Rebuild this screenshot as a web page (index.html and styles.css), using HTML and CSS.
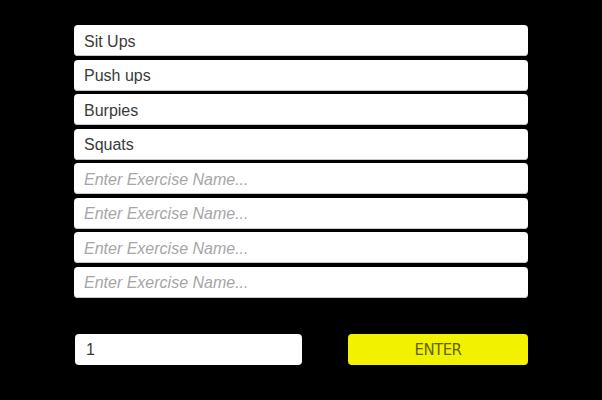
FILE: index.html
```html
<!DOCTYPE html>
<html>
<head>
<meta charset="utf-8">
<link rel="stylesheet" href="styles.css">
</head>
<body>
<div class="page">
  <div class="list">
    <input class="field" type="text" value="Sit Ups">
    <input class="field" type="text" value="Push ups">
    <input class="field" type="text" value="Burpies">
    <input class="field" type="text" value="Squats">
    <input class="field" type="text" placeholder="Enter Exercise Name...">
    <input class="field" type="text" placeholder="Enter Exercise Name...">
    <input class="field" type="text" placeholder="Enter Exercise Name...">
    <input class="field" type="text" placeholder="Enter Exercise Name...">
  </div>
  <div class="controls">
    <input class="field count" type="text" value="1">
    <button class="enter">ENTER</button>
  </div>
</div>
</body>
</html>
```
FILE: styles.css
```css
html, body {
  margin: 0;
  padding: 0;
  background: #000;
}
.page {
  width: 602px;
  height: 400px;
  box-sizing: border-box;
  padding: 25px 74px 0 74px;
  font-family: "Liberation Sans", Arial, sans-serif;
}
.list {
  display: flex;
  flex-direction: column;
  gap: 3.5px;
}
.field {
  display: block;
  box-sizing: border-box;
  width: 454px;
  height: 31px;
  margin: 0;
  border: none;
  border-radius: 4px;
  background: #fff;
  box-shadow: inset 0 -1px 0 #c8c8c8;
  padding: 2px 10px 0 10px;
  font-family: "Liberation Sans", Arial, sans-serif;
  font-size: 16px;
  color: #3a3a3a;
  outline: none;
}
.field::placeholder {
  color: #a6a6a6;
  font-style: italic;
}
.controls {
  display: flex;
  justify-content: space-between;
  margin-top: 36px;
}
.count {
  width: 227px;
  height: 31px;
  padding-left: 11px;
  box-shadow: none;
  margin-left: 1px;
}
.enter {
  width: 180px;
  height: 31px;
  border: none;
  border-radius: 4px;
  background: #f2f200;
  color: #646400;
  font-family: "DejaVu Sans", sans-serif;
  font-size: 15px;
  letter-spacing: -0.6px;
  padding: 1px 0 0 0;
  margin-right: 0;
}
```
